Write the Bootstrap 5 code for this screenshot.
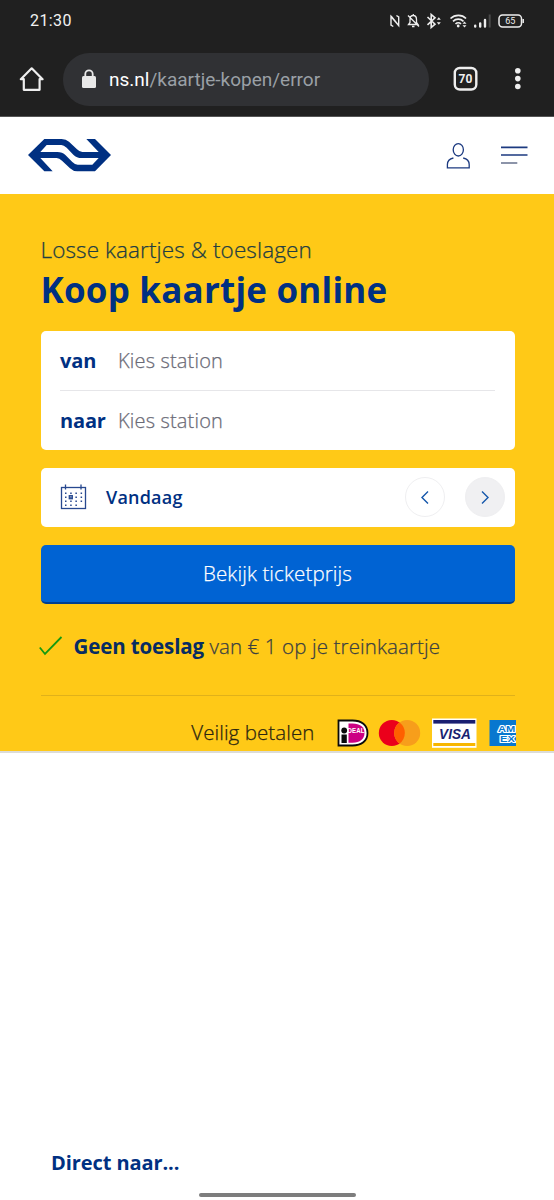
<!DOCTYPE html>
<html lang="nl">
<head>
<meta charset="utf-8">
<meta name="viewport" content="width=device-width, initial-scale=1">
<title>Koop kaartje online</title>
<link rel="stylesheet" href="https://cdn.jsdelivr.net/npm/bootstrap@5.3.0/dist/css/bootstrap.min.css">
<style>
  body { font-family: "Open Sans", "Noto Sans", sans-serif; color: #030303; background: #fff; height: 1200px; overflow: hidden; }
  svg { display: block; flex: none; }
  .t { white-space: nowrap; line-height: 1; }
  .thin { font-weight: 300; -webkit-text-stroke: .25px currentColor; }
  .browser { height: 117px; background: #202020; border-bottom: 1px solid #555; font-family: Roboto, sans-serif; }
  .status { height: 42px; padding: 0 29px 0 30px; color: #f2f2f2; }
  .clock { font-size: 16px; letter-spacing: .4px; }
  .tools { height: 74px; padding-left: 19px; }
  .address { width: 366px; height: 53px; margin-left: 18px; padding-left: 18px; background: #303134; border-radius: 27px; font-size: 19px; color: #9aa0a6; }
  .address b { font-weight: 400; color: #fff; }
  .site { height: 77px; padding: 0 26px 0 28px; }
  .hero { height: 558.5px; padding: 0 39.5px 0 40.5px; background: #ffc917; border-bottom: 2px solid #dcdcd8; color: #3b4041; }
  .kicker { font-size: 22.5px; padding-top: 45px; color: #223d42; letter-spacing: .11px; }
  .title { font-size: 35px; font-weight: 700; color: #003082; margin: 10px 0 24px; letter-spacing: .2px; }
  .panel { background: #fff; border-radius: 5px; padding: 0 19.5px; }
  .stop { height: 59px; font-size: 20px; padding-top: 2px; }
  .stop + .stop { border-top: 1px solid #e6e6e9; height: 60px; }
  .stop strong { width: 58px; color: #003082; letter-spacing: -.15px; }
  .stop span { color: #6a6a76; letter-spacing: .17px; }
  .date { height: 59px; margin-top: 18px; padding-right: 10px; color: #003082; font-weight: 600; font-size: 18px; letter-spacing: .2px; }
  .step { width: 40px; height: 40px; border: 1px solid #efeff1; }
  .step-on { background: #f0f0f2; }
  .buy { height: 59px; margin-top: 18px; border: 0; border-bottom: 2px solid #003f91; border-radius: 5px; background: #0063d3; color: #fff; font-size: 20.5px; letter-spacing: .12px; }
  .usp { height: 92px; font-size: 20.5px; border-bottom: 1px solid #e0b11a; padding-bottom: 6px; }
  .usp strong { color: #072c62; font-weight: 700; letter-spacing: -.12px; }
  .usp .thin { letter-spacing: .12px; }
  .pay { height: 55px; padding-top: 19px; font-size: 20.5px; color: #2b2610; letter-spacing: .08px; }
  .direct { margin: 400.500px 0 0 51px; font-size: 20px; font-weight: 700; color: #003082; letter-spacing: -.08px; }
  .homebar { width: 157px; height: 4px; border-radius: 2px; background: #7d7d7d; margin: 20px auto 0; }
</style>
</head>
<body>
<header class="browser">
  <div class="status d-flex align-items-center justify-content-between">
    <span class="clock t">21:30</span>
    <svg width="136" height="18" viewBox="389 12 136 18" fill="none" stroke="#eee" stroke-width="1.400">
      <path d="M393.300 26.500l-2.300-1.500v-8.500l7.700 9v-8.500l-2.300-1.500M391 16l7.700 9.500" stroke-width="1.400"/>
      <path d="M408.500 24.500h9.500l-1.500-2v-3c0-2.600-1.300-4-3.300-4s-3.200 1.400-3.200 4v3zM413.300 15.500v-1.500M412 26.500h2.500M408 15.500l11 11" stroke-width="1.300"/>
      <path d="M427.500 17l7.500 7.200-3.800 3.300v-13l3.800 3.300-7.500 7" stroke-width="1.600"/>
      <path d="M436.800 19.800l2-2.500 2 2.500zM436.800 22.200l2 2.500 2-2.500z" fill="#eee" stroke="none"/>
      <path d="M450.500 18.500c4.500-4.300 11.500-4.300 15.500 0M453 21.300c3-2.800 7.500-2.800 10.500 0M455.500 24c1.600-1.500 4-1.500 5.500 0" stroke-width="1.700"/>
      <circle cx="458.200" cy="26" r="1.400" fill="#eee" stroke="none"/>
      <path d="M462.500 23.800l2-2.300 2 2.300zM462.500 25.200l2 2.300 2-2.300z" fill="#eee" stroke="none"/>
      <path d="M475.200 26.500v-.800M480.200 26.500v-3M485 26.500v-6.500" stroke-width="2.400" stroke-linecap="round"/>
      <path d="M489.700 27.500v-13" stroke="#4a4a4a" stroke-width="2"/>
      <rect x="499" y="15" width="22.500" height="12" rx="3.500" stroke-width="1.500"/>
      <path d="M523.200 19v4" stroke-width="1.500"/>
      <text x="510.300" y="24.300" text-anchor="middle" font-size="9" font-weight="400" font-family="Roboto, sans-serif" fill="#eee" stroke="none">65</text>
    </svg>
  </div>
  <div class="tools d-flex align-items-center">
    <svg width="26" height="26" viewBox="0 0 26 26" fill="none" stroke="#eee" stroke-width="2.200" stroke-linejoin="round" stroke-linecap="round"><path d="M1.800 13.200L12.700 2.300l10.900 10.900h-3v10.600H4.800V13.200z"/></svg>
    <div class="address d-flex align-items-center">
      <svg width="16" height="20" viewBox="0 0 16 20"><rect x="1" y="7" width="14" height="12" rx="1.500" fill="#e8e8e8"/><path d="M4.300 8V5a3.700 3.700 0 0 1 7.400 0v3" fill="none" stroke="#e8e8e8" stroke-width="1.800"/></svg>
      <span class="t ms-2 ps-1"><b>ns.nl</b>/kaartje-kopen/error</span>
    </div>
    <svg class="ms-4" width="70" height="26" viewBox="1 0 70 26"><rect x="2.800" y="2" width="21.500" height="21.500" rx="5" fill="none" stroke="#eee" stroke-width="2.400"/><text x="13.500" y="17" text-anchor="middle" font-family="Roboto, sans-serif" font-weight="700" font-size="12" fill="#eee">70</text><g fill="#eee"><circle cx="65.800" cy="4.700" r="2.800"/><circle cx="65.800" cy="12.600" r="2.800"/><circle cx="65.800" cy="20.500" r="2.800"/></g></svg>
  </div>
</header>

<nav class="site d-flex align-items-center justify-content-between">
  <svg width="84" height="34" viewBox="84 86 252 102"><path fill="#003082" fill-rule="evenodd" d="M84 134L133 86H185Q198 86 207 94L231 117Q239 125 247 125H296L259 86H285L333 134L285 183H232Q219 183 210 174L186 151Q178 143 170 143H121L158 183H133ZM121 125H172Q187 125 197 135L217 155Q225 163 233 163H277L296 143H245Q230 143 220 133L200 112Q191 104 184 104H140Z"/></svg>
  <svg width="82" height="28" viewBox="446 142 82 28" fill="none" stroke="#1c3a80" stroke-width="1.300">
    <ellipse cx="458.300" cy="149.800" rx="5.100" ry="6.200"/><path d="M453.400 158c-4.300 1-6 3.500-6 6.500v3.300h21.800v-3.300c0-3-1.700-5.500-6-6.500"/>
    <path d="M501 147.300h26.500M501 155h26.500" stroke-width="1.700"/><path d="M501 163h16.300" stroke="#66718d" stroke-width="1.500"/>
  </svg>
</nav>

<main>
  <section class="hero">
    <div class="kicker thin t">Losse kaartjes &amp; toeslagen</div>
    <h1 class="title t">Koop kaartje online</h1>
    <div class="panel">
      <div class="stop d-flex align-items-center"><strong class="t">van</strong><span class="t thin">Kies station</span></div>
      <div class="stop d-flex align-items-center"><strong class="t">naar</strong><span class="t thin">Kies station</span></div>
    </div>
    <div class="panel date d-flex align-items-center">
      <svg width="27" height="26" viewBox="0 0 27 26" fill="none" stroke="#27488f" stroke-width="1.300"><rect x="1.500" y="3.500" width="24" height="21"/><path d="M5.500 .5v5M21 .5v5"/><path d="M5 9.200h18M5 13.200h18M5 17.200h18M5 21.200h13" stroke-dasharray="1.500 3.700" stroke-width="1.500"/><rect x="9.300" y="11.700" width="3" height="3" stroke-width="1.300"/></svg>
      <span class="t" style="margin-left:19px">Vandaag</span>
      <span class="step rounded-circle d-flex align-items-center justify-content-center ms-auto"><svg width="8" height="13" viewBox="0 0 8 13" fill="none" stroke="#1557ab" stroke-width="1.400"><path d="M7 .6L1 6.500l6 5.900"/></svg></span>
      <span class="step step-on rounded-circle d-flex align-items-center justify-content-center" style="margin-left:20px"><svg width="8" height="13" viewBox="0 0 8 13" fill="none" stroke="#1557ab" stroke-width="1.400"><path d="M1 .6l6 5.900-6 5.900"/></svg></span>
    </div>
    <button class="buy w-100 d-flex align-items-center justify-content-center"><span class="t thin">Bekijk ticketprijs</span></button>
    <div class="usp d-flex align-items-center">
      <svg width="24" height="20" viewBox="0 0 24 20" fill="none" stroke="#159a10" stroke-width="1.800" style="margin-left:-2px"><path d="M.8 11.500L6 18 22.500 1"/></svg>
      <span class="t" style="margin-left:11px"><strong>Geen toeslag</strong> <span class="thin">van € 1 op je treinkaartje</span></span>
    </div>
    <div class="pay d-flex align-items-center justify-content-end">
      <span class="t thin">Veilig betalen</span>
      <svg width="180" height="30" viewBox="336 718 180 30" style="margin:0 -1px 0 21px" font-family="Liberation Sans, sans-serif">
        <path d="M338.500 720.500h14c9 0 15 4.500 15 12.500s-6 12.500-15 12.500h-14z" fill="#fff" stroke="#0a0a0a" stroke-width="1.800"/>
        <path d="M348.500 723.500h4c7.500 0 12 3.500 12 9.500s-4.500 9.700-12 9.700h-4z" fill="#cc0083"/>
        <circle cx="344.200" cy="730.500" r="2.900" fill="#0a0a0a"/><rect x="341.500" y="734.500" width="5.300" height="8.500" fill="#0a0a0a"/>
        <text x="347.500" y="733.400" font-size="6.500" font-weight="700" fill="#fff" textLength="17" lengthAdjust="spacingAndGlyphs">DEAL</text>
        <circle cx="391.800" cy="733" r="13" fill="#eb001b"/><circle cx="407.200" cy="733" r="13" fill="#f79e1b"/>
        <path d="M399.500 722.500a13 13 0 0 1 0 21a13 13 0 0 1 0-21z" fill="#ff5f00"/>
        <rect x="432" y="718.500" width="44.500" height="29.300" fill="#fff"/><rect x="433.300" y="720" width="42" height="3.600" fill="#1a1f71"/><rect x="433.300" y="743" width="42" height="3" fill="#f7b600"/>
        <text x="439" y="738.500" font-size="15" font-weight="700" font-style="italic" fill="#1a1f71" textLength="32" lengthAdjust="spacingAndGlyphs">VISA</text>
        <rect x="489.500" y="720" width="26.500" height="26" fill="#0877cf"/>
        <g font-size="9" font-weight="700" fill="#0877cf" stroke="#fff" stroke-width="2.200" stroke-linejoin="round" paint-order="stroke"><text x="498" y="731.600" textLength="17.500" lengthAdjust="spacingAndGlyphs">AM</text><text x="500" y="741.900" textLength="15" lengthAdjust="spacingAndGlyphs">EX</text></g>
      </svg>
    </div>
  </section>
  <h2 class="direct t">Direct naar...</h2>
</main>
<div class="homebar"></div>
<script src="https://cdn.jsdelivr.net/npm/bootstrap@5.3.0/dist/js/bootstrap.bundle.min.js"></script>
</body>
</html>
